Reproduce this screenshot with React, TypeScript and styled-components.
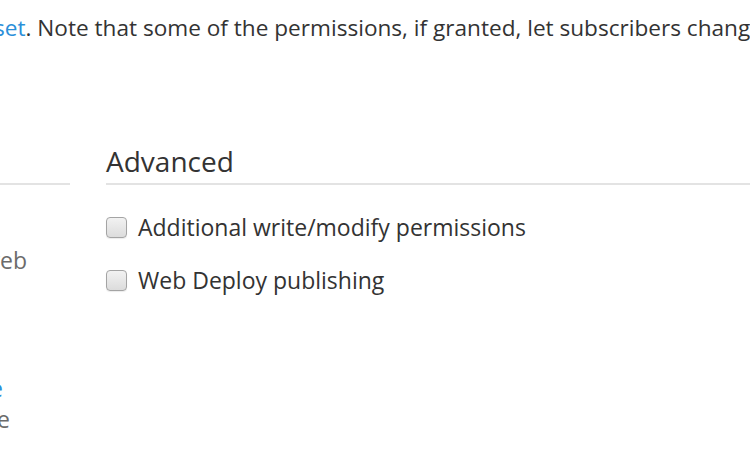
import React from "react";
import styled, { createGlobalStyle } from "styled-components";

const GlobalStyle = createGlobalStyle`
  html, body {
    margin: 0;
    padding: 0;
    background: #fff;
  }
  body {
    font-family: "Open Sans", "Noto Sans", sans-serif;
    color: #333;
  }
`;

const Page = styled.div`
  width: 750px;
  height: 450px;
  overflow: hidden;
  position: relative;
`;

const Intro = styled.p`
  margin: 0;
  padding-top: 13px;
  margin-left: -6px;
  white-space: nowrap;
  font-size: 22.6px;
  line-height: 30px;
  color: #333;
`;

const Link = styled.a`
  color: #2b8fd9;
  text-decoration: none;
`;

const Columns = styled.div`
  display: flex;
  gap: 36px;
  margin-top: 99px;
`;

const Column = styled.section<{ width: number; shift?: number }>`
  flex: none;
  width: ${(p) => p.width}px;
  margin-left: ${(p) => -(p.shift ?? 0)}px;
`;

const Heading = styled.h3`
  margin: 0;
  font-size: 28px;
  font-weight: 400;
  line-height: 38px;
  color: #333;
  padding-bottom: 3px;
  border-bottom: 2px solid #e3e3e3;
  white-space: nowrap;
`;

const Options = styled.div`
  display: flex;
  flex-direction: column;
  gap: 21px;
  padding-top: 26px;
`;

const Option = styled.label`
  display: flex;
  align-items: center;
  gap: 11px;
  font-size: 23px;
  line-height: 32px;
  white-space: nowrap;
  cursor: pointer;
`;

const Box = styled.input.attrs({ type: "checkbox" })`
  appearance: none;
  margin: 0;
  width: 21px;
  height: 21px;
  border: 1px solid #a4a4a4;
  border-radius: 4px;
  background: linear-gradient(#f2f2f2, #dcdcdc);
  box-shadow: 0 1px 1px rgba(0, 0, 0, 0.08);
  flex: none;
`;

const Hints = styled.div`
  display: flex;
  flex-direction: column;
  padding-top: 60px;
`;

const Hint = styled.div<{ end: number; gapTop?: number }>`
  display: flex;
  justify-content: flex-end;
  white-space: nowrap;
  font-size: 23px;
  line-height: 31px;
  color: #6b6b6b;
  padding-right: ${(p) => p.end}px;
  margin-top: ${(p) => p.gapTop ?? 0}px;
`;

export default function App() {
  return (
    <>
      <GlobalStyle />
      <Page>
        <Intro>
          <Link href="#">set</Link>. Note that some of the permissions, if granted, let
          subscribers change the hosting settings
        </Intro>
        <Columns>
          <Column width={330} shift={260}>
            <Heading>General</Heading>
            <Hints>
              <Hint end={43}>
                <span>Manage hosting settings for web</span>
              </Hint>
              <Hint end={67} gapTop={97}>
                <Link href="#">Learn more</Link>
              </Hint>
              <Hint end={60}>
                <span>about this option in the guide</span>
              </Hint>
            </Hints>
          </Column>
          <Column width={700}>
            <Heading>Advanced</Heading>
            <Options>
              <Option>
                <Box />
                Additional write/modify permissions
              </Option>
              <Option>
                <Box />
                Web Deploy publishing
              </Option>
            </Options>
          </Column>
        </Columns>
      </Page>
    </>
  );
}
